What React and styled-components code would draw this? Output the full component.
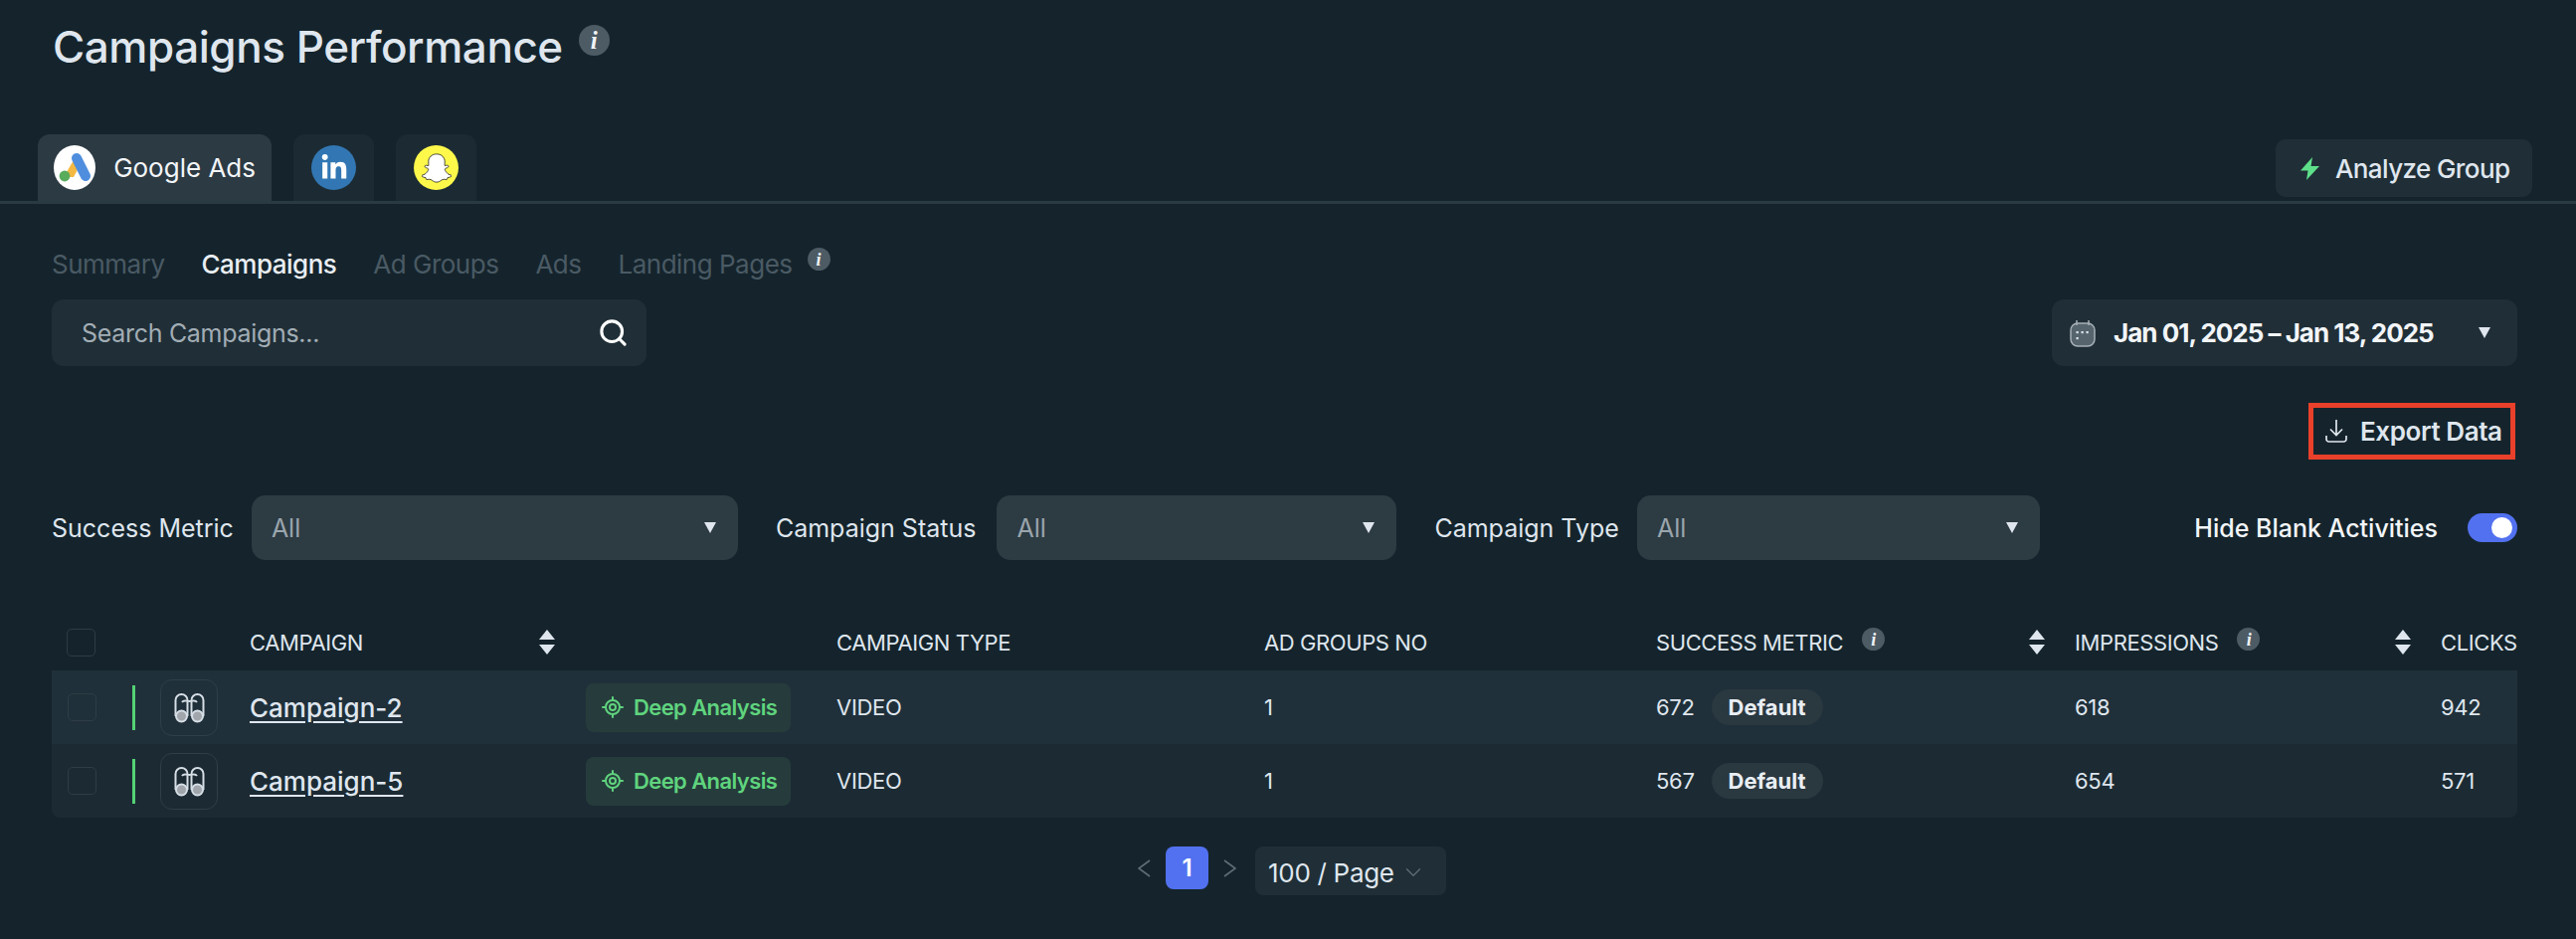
import React from 'react'
import styled, {createGlobalStyle} from 'styled-components'
import {LocateFixed, Search, ChevronDown} from 'lucide-react'
import {FaLinkedinIn, FaSnapchatGhost} from 'react-icons/fa'

const GlobalStyle = createGlobalStyle`
    html, body {
        margin: 0;
        height: 100%;
        background: #15242c;
    }
    body {
        font-family: Inter, "Noto Sans", sans-serif;
        color: #dfe6ee;
    }
    * {
        box-sizing: border-box;
    }
`

const columns = '60px 38px 88px 337px 253px 430px 394px 421px 368px 200px'

const Page = styled.div`
    width: 2590px;
    height: 944px;
    overflow: hidden;
`

const TitleRow = styled.div`
    display: flex;
    align-items: flex-start;
    height: 135px;
    padding: 22px 0 0 53px;
    gap: 16px;
`

const Title = styled.h1`
    margin: 0;
    font-size: 44px;
    line-height: 50px;
    font-weight: 500;
    letter-spacing: -0.45px;
    color: #dfe6ee;
`

const InfoDot = styled.span`
    display: inline-flex;
    align-items: center;
    justify-content: center;
    flex: none;
    width: ${props => props.size}px;
    height: ${props => props.size}px;
    margin-top: ${props => props.top || 0}px;
    border-radius: 50%;
    background: #4d5b65;
    color: #f0f3f6;
    font-family: "Liberation Serif", serif;
    font-style: italic;
    font-weight: 700;
    font-size: ${props => Math.round(props.size * 0.8)}px;
    line-height: 1;
`

const TabBar = styled.div`
    display: flex;
    align-items: flex-end;
    justify-content: space-between;
    height: 70px;
    padding: 0 44px 0 38px;
    border-bottom: 3px solid #2a3a42;
`

const TabGroup = styled.div`
    display: flex;
    gap: 22px;
`

const Tab = styled.div`
    display: flex;
    align-items: center;
    justify-content: ${props => props.$active ? 'flex-start' : 'center'};
    gap: 18px;
    width: ${props => props.$active ? 235 : 81}px;
    height: 67px;
    padding: ${props => props.$active ? '0 16px' : '0'};
    border-radius: 12px 12px 0 0;
    background: ${props => props.$active ? '#2c3a43' : '#1c2b33'};
    color: #f2f5f8;
    font-size: 26px;
    font-weight: 400;
    white-space: nowrap;
`

const LogoCircle = styled.span`
    display: flex;
    align-items: center;
    justify-content: center;
    width: 45px;
    height: 45px;
    border-radius: 50%;
    background: ${props => props.bg};
    color: #fff;
    font-size: 28px;
`

const SnapGhost = styled(FaSnapchatGhost)`
    stroke: #222;
    stroke-width: 14px;
    font-size: 30px;
`

const AnalyzeButton = styled.button`
    display: flex;
    align-items: center;
    gap: 16px;
    width: 258px;
    height: 58px;
    margin-bottom: 4px;
    padding: 0 0 0 25px;
    border: 0;
    border-radius: 10px;
    background: #202f37;
    color: #dfe6ee;
    font-family: inherit;
    font-size: 26px;
    font-weight: 500;
    letter-spacing: -0.6px;
`

const Content = styled.div`
    padding: 0 59px 0 52px;
`

const SubTabs = styled.div`
    display: flex;
    align-items: center;
    gap: 37px;
    height: 34px;
    margin-top: 43px;
`

const SubTab = styled.span`
    font-size: 26px;
    letter-spacing: -0.5px;
    color: ${props => props.$active ? '#e9eef3' : '#4a5a64'};
    font-weight: ${props => props.$active ? 500 : 400};
`

const SubTabInfo = styled.span`
    display: flex;
    margin: -9px 0 0 -22px;
`

const ControlsRow = styled.div`
    display: flex;
    justify-content: space-between;
    margin-top: 19px;
`

const SearchBox = styled.div`
    display: flex;
    align-items: center;
    justify-content: space-between;
    width: 598px;
    height: 67px;
    padding: 0 18px 0 30px;
    border-radius: 12px;
    background: #202f37;
    color: #a2adb5;
    font-size: 25px;
    letter-spacing: -0.3px;
`

const DatePicker = styled.div`
    display: flex;
    align-items: center;
    gap: 18px;
    width: 468px;
    height: 67px;
    padding: 0 27px 0 18px;
    border-radius: 12px;
    background: #202f37;
    color: #f2f5f8;
    font-size: 26px;
    font-weight: 700;
    letter-spacing: -1px;
`

const DateText = styled.span`
    flex: 1;
    white-space: nowrap;
`

const Caret = styled.span`
    flex: none;
    width: 0;
    height: 0;
    border-left: 6px solid transparent;
    border-right: 6px solid transparent;
    border-top: 11px solid #dfe6ee;
`

const ExportRow = styled.div`
    display: flex;
    justify-content: flex-end;
    margin-top: 37px;
`

const ExportButton = styled.button`
    display: flex;
    align-items: center;
    gap: 13px;
    width: 208px;
    height: 57px;
    margin-right: 2px;
    padding: 0 0 0 12px;
    border: 5px solid #e8402a;
    background: transparent;
    color: #dfe6ee;
    font-family: inherit;
    font-size: 26px;
    font-weight: 600;
    letter-spacing: -0.4px;
    white-space: nowrap;
`

const FilterRow = styled.div`
    display: flex;
    align-items: center;
    margin-top: 36px;
    height: 65px;
`

const FilterLabel = styled.label`
    margin: 0 ${props => props.$after || 18}px 0 ${props => props.$gap || 0}px;
    font-size: 25px;
    color: #dfe6ee;
    white-space: nowrap;
`

const Select = styled.div`
    display: flex;
    align-items: center;
    justify-content: space-between;
    width: ${props => props.$width}px;
    height: 65px;
    padding: 0 22px 0 20px;
    border-radius: 14px;
    background: #2d3b43;
    color: #9aa5ad;
    font-size: 25px;
`

const ToggleGroup = styled.div`
    display: flex;
    align-items: center;
    gap: 30px;
    margin-left: auto;
    color: #f2f5f8;
    font-size: 25px;
    font-weight: 500;
`

const Toggle = styled.span`
    display: flex;
    align-items: center;
    justify-content: flex-end;
    width: 50px;
    height: 29px;
    padding: 0 5px;
    border-radius: 15px;
    background: #5271f0;
`

const Knob = styled.span`
    width: 21px;
    height: 21px;
    border-radius: 50%;
    background: #fff;
`

const Table = styled.div`
    width: 2479px;
    margin-top: 46px;
    overflow: hidden;
    border-radius: 0 0 8px 8px;
`

const HeadRow = styled.div`
    display: grid;
    grid-template-columns: ${columns};
    align-items: center;
    height: 65px;
    padding-top: 8px;
`

const Row = styled.div`
    display: grid;
    grid-template-columns: ${columns};
    align-items: center;
    height: 74px;
    background: ${props => props.$alt ? '#1c2b33' : '#20303a'};
`

const Cell = styled.div`
    display: flex;
    align-items: center;
    min-width: 0;
    padding-left: 13px;
    font-size: 22px;
    letter-spacing: -0.3px;
    color: #dfe6ee;
    white-space: nowrap;
`

const BareCell = styled(Cell)`
    padding-left: 0;
`

const HeadCell = styled(Cell)`
    font-size: 22px;
    font-weight: 400;
    letter-spacing: -0.4px;
    justify-content: ${props => props.$spread ? 'space-between' : 'flex-start'};
    padding-right: ${props => props.$spread ? 17 : 0}px;
`

const HeadLabel = styled.span`
    display: flex;
    align-items: center;
    gap: 19px;
`

const Check = styled.span`
    display: block;
    width: 29px;
    height: 28px;
    margin-left: ${props => props.$head ? 2 : 3}px;
    border: 1.5px solid #2d3c45;
    border-radius: 5px;
`

const StatusBar = styled.span`
    display: block;
    width: 3px;
    height: 45px;
    margin-left: 21px;
    background: #54d275;
`

const IconBox = styled.span`
    display: flex;
    align-items: center;
    justify-content: center;
    width: 58px;
    height: 57px;
    margin-left: 11px;
    border: 1.5px solid #2f3e47;
    border-radius: 12px;
`

const CampaignLink = styled.a`
    color: #dfe6ee;
    font-size: 26px;
    font-weight: 500;
    letter-spacing: 0;
    text-decoration: underline;
    text-underline-offset: 4px;
`

const AnalysisChip = styled.span`
    display: flex;
    align-items: center;
    gap: 9px;
    width: 206px;
    height: 49px;
    margin-left: 1px;
    padding-left: 15px;
    border-radius: 8px;
    background: #263c3c;
    color: #5fd47e;
    font-size: 22px;
    font-weight: 600;
    letter-spacing: -0.6px;
`

const MetricChip = styled.span`
    display: flex;
    align-items: center;
    justify-content: center;
    width: 112px;
    height: 36px;
    margin-left: 17px;
    border-radius: 18px;
    background: #2a3840;
    color: #e9eef3;
    font-size: 22px;
    font-weight: 700;
    letter-spacing: 0;
`

const SortWrap = styled.span`
    display: flex;
    flex-direction: column;
    gap: 5px;
    flex: none;
`

const Triangle = styled.span`
    display: block;
    width: 0;
    height: 0;
    border-left: 8px solid transparent;
    border-right: 8px solid transparent;
    border-${props => props.$up ? 'bottom' : 'top'}: 10px solid #dfe6ee;
`

const Pagination = styled.div`
    display: flex;
    align-items: flex-start;
    justify-content: center;
    margin: 29px 0 0 15px;
`

const PageArrow = styled.span`
    display: flex;
    align-items: center;
    height: 43px;
    margin: ${props => props.$next ? '0 19px 0 15px' : '0 15px 0 0'};
`

const PageNumber = styled.span`
    display: flex;
    align-items: center;
    justify-content: center;
    width: 43px;
    height: 43px;
    border-radius: 8px;
    background: #5271f0;
    color: #fff;
    font-size: 24px;
    font-weight: 600;
`

const PageSize = styled.span`
    display: flex;
    align-items: center;
    justify-content: space-between;
    width: 192px;
    height: 49px;
    padding: 3px 20px 0 13px;
    border-radius: 8px;
    background: #202f37;
    color: #dfe6ee;
    font-size: 26px;
    letter-spacing: -0.3px;
`

// drawn icons, the packages have nothing close enough
const GoogleAdsLogo = () => (
    <LogoCircle bg="#fff">
        <svg width="33" height="31" viewBox="0 0 33 31">
            <path d="M15 8 L5 25 H15 L21 14 Z" fill="#f4b942" />
            <path d="M18 6 L27 24" stroke="#4f8ede" strokeWidth="10" strokeLinecap="round" />
            <circle cx="6" cy="24" r="5.4" fill="#58ac5c" />
        </svg>
    </LogoCircle>
)

const Bolt = () => (
    <svg width="19" height="23" viewBox="0 0 19 23">
        <path d="M12 0 L0 13.5 H7.5 L6 23 L19 9 H10.5 Z" fill="#5ee08a" />
    </svg>
)

const CalendarIcon = () => (
    <svg width="26" height="28" viewBox="0 0 26 28" fill="none">
        <rect x="1" y="4" width="24" height="23" rx="7" fill="#56646d" stroke="#a6b0b7" strokeWidth="1.5" />
        <path d="M7 1v5M19 1v5" stroke="#a6b0b7" strokeWidth="1.5" />
        <g fill="#dfe6ee">
            <rect x="6.5" y="12" width="2.2" height="2.2" />
            <rect x="11.5" y="12" width="2.2" height="2.2" />
            <rect x="16.5" y="12" width="2.2" height="2.2" />
            <rect x="6.5" y="18" width="2.2" height="2.2" />
        </g>
    </svg>
)

const ExportIcon = () => (
    <svg width="22" height="23" viewBox="0 0 22 23" fill="none" stroke="#dfe6ee" strokeWidth="1.7">
        <path d="M11 0v15M5 9.5l6 6 6-6" />
        <path d="M1 16v3.5a2.5 2.5 0 0 0 2.5 2.5h15a2.5 2.5 0 0 0 2.5-2.5V16" />
    </svg>
)

const Binoculars = () => (
    <svg width="31" height="31" viewBox="0 0 31 31" fill="none" stroke="#d5dde5" strokeWidth="2">
        <path d="M1.500 24V8a6 6 0 0 1 12 0v16" />
        <path d="M17.500 24V8a6 6 0 0 1 12 0v16" />
        <path d="M8 10c2-3 4-1 7.500-1s5.500-2 7.500 1" />
        <circle cx="7.500" cy="24" r="5.500" fill="#a0a6ab" />
        <circle cx="23.500" cy="24" r="5.500" fill="#a0a6ab" />
    </svg>
)

const PagerChevron = ({next}) => (
    <svg width="13" height="18" viewBox="0 0 13 18" fill="none" stroke="#5f6d76" strokeWidth="1.6">
        <path d={next ? 'M1 1l11 8-11 8' : 'M12 1L1 9l11 8'} />
    </svg>
)

const Sort = () => (
    <SortWrap>
        <Triangle $up />
        <Triangle />
    </SortWrap>
)

const rows = [
    {name: 'Campaign-2', metric: 672, impressions: 618, clicks: 942},
    {name: 'Campaign-5', metric: 567, impressions: 654, clicks: 571},
]

export default function App() {
    return (
        <Page>
            <GlobalStyle />
            <TitleRow>
                <Title>Campaigns Performance</Title>
                <InfoDot size={31} top={3}>i</InfoDot>
            </TitleRow>
            <TabBar>
                <TabGroup>
                    <Tab $active>
                        <GoogleAdsLogo />
                        Google Ads
                    </Tab>
                    <Tab>
                        <LogoCircle bg="#3277b3"><FaLinkedinIn /></LogoCircle>
                    </Tab>
                    <Tab>
                        <LogoCircle bg="#fdf84a"><SnapGhost /></LogoCircle>
                    </Tab>
                </TabGroup>
                <AnalyzeButton><Bolt />Analyze Group</AnalyzeButton>
            </TabBar>
            <Content>
                <SubTabs>
                    <SubTab>Summary</SubTab>
                    <SubTab $active>Campaigns</SubTab>
                    <SubTab>Ad Groups</SubTab>
                    <SubTab>Ads</SubTab>
                    <SubTab>Landing Pages</SubTab>
                    <SubTabInfo><InfoDot size={23}>i</InfoDot></SubTabInfo>
                </SubTabs>
                <ControlsRow>
                    <SearchBox>
                        Search Campaigns...
                        <Search size={31} color="#fff" strokeWidth={2.4} />
                    </SearchBox>
                    <DatePicker>
                        <CalendarIcon />
                        <DateText>Jan 01, 2025 – Jan 13, 2025</DateText>
                        <Caret />
                    </DatePicker>
                </ControlsRow>
                <ExportRow>
                    <ExportButton><ExportIcon />Export Data</ExportButton>
                </ExportRow>
                <FilterRow>
                    <FilterLabel>Success Metric</FilterLabel>
                    <Select $width={489}>All<Caret /></Select>
                    <FilterLabel $gap={38} $after={21}>Campaign Status</FilterLabel>
                    <Select $width={402}>All<Caret /></Select>
                    <FilterLabel $gap={38}>Campaign Type</FilterLabel>
                    <Select $width={405}>All<Caret /></Select>
                    <ToggleGroup>
                        Hide Blank Activities
                        <Toggle><Knob /></Toggle>
                    </ToggleGroup>
                </FilterRow>
                <Table>
                    <HeadRow>
                        <Cell><Check $head /></Cell>
                        <Cell />
                        <Cell />
                        <HeadCell $spread>CAMPAIGN<Sort /></HeadCell>
                        <Cell />
                        <HeadCell>CAMPAIGN TYPE</HeadCell>
                        <HeadCell>AD GROUPS NO</HeadCell>
                        <HeadCell $spread>
                            <HeadLabel>SUCCESS METRIC<InfoDot size={23} top={-6}>i</InfoDot></HeadLabel>
                            <Sort />
                        </HeadCell>
                        <HeadCell $spread>
                            <HeadLabel>IMPRESSIONS<InfoDot size={23} top={-6}>i</InfoDot></HeadLabel>
                            <Sort />
                        </HeadCell>
                        <HeadCell>CLICKS</HeadCell>
                    </HeadRow>
                    {rows.map((row, i) => (
                        <Row key={row.name} $alt={i % 2 === 1}>
                            <Cell><Check /></Cell>
                            <BareCell><StatusBar /></BareCell>
                            <BareCell><IconBox><Binoculars /></IconBox></BareCell>
                            <Cell><CampaignLink>{row.name}</CampaignLink></Cell>
                            <Cell>
                                <AnalysisChip>
                                    <LocateFixed size={24} strokeWidth={2} />
                                    Deep Analysis
                                </AnalysisChip>
                            </Cell>
                            <Cell>VIDEO</Cell>
                            <Cell>1</Cell>
                            <Cell>{row.metric}<MetricChip>Default</MetricChip></Cell>
                            <Cell>{row.impressions}</Cell>
                            <Cell>{row.clicks}</Cell>
                        </Row>
                    ))}
                </Table>
                <Pagination>
                    <PageArrow><PagerChevron /></PageArrow>
                    <PageNumber>1</PageNumber>
                    <PageArrow $next><PagerChevron next /></PageArrow>
                    <PageSize>100 / Page<ChevronDown size={26} strokeWidth={1.2} color="#5f6d76" /></PageSize>
                </Pagination>
            </Content>
        </Page>
    )
}
